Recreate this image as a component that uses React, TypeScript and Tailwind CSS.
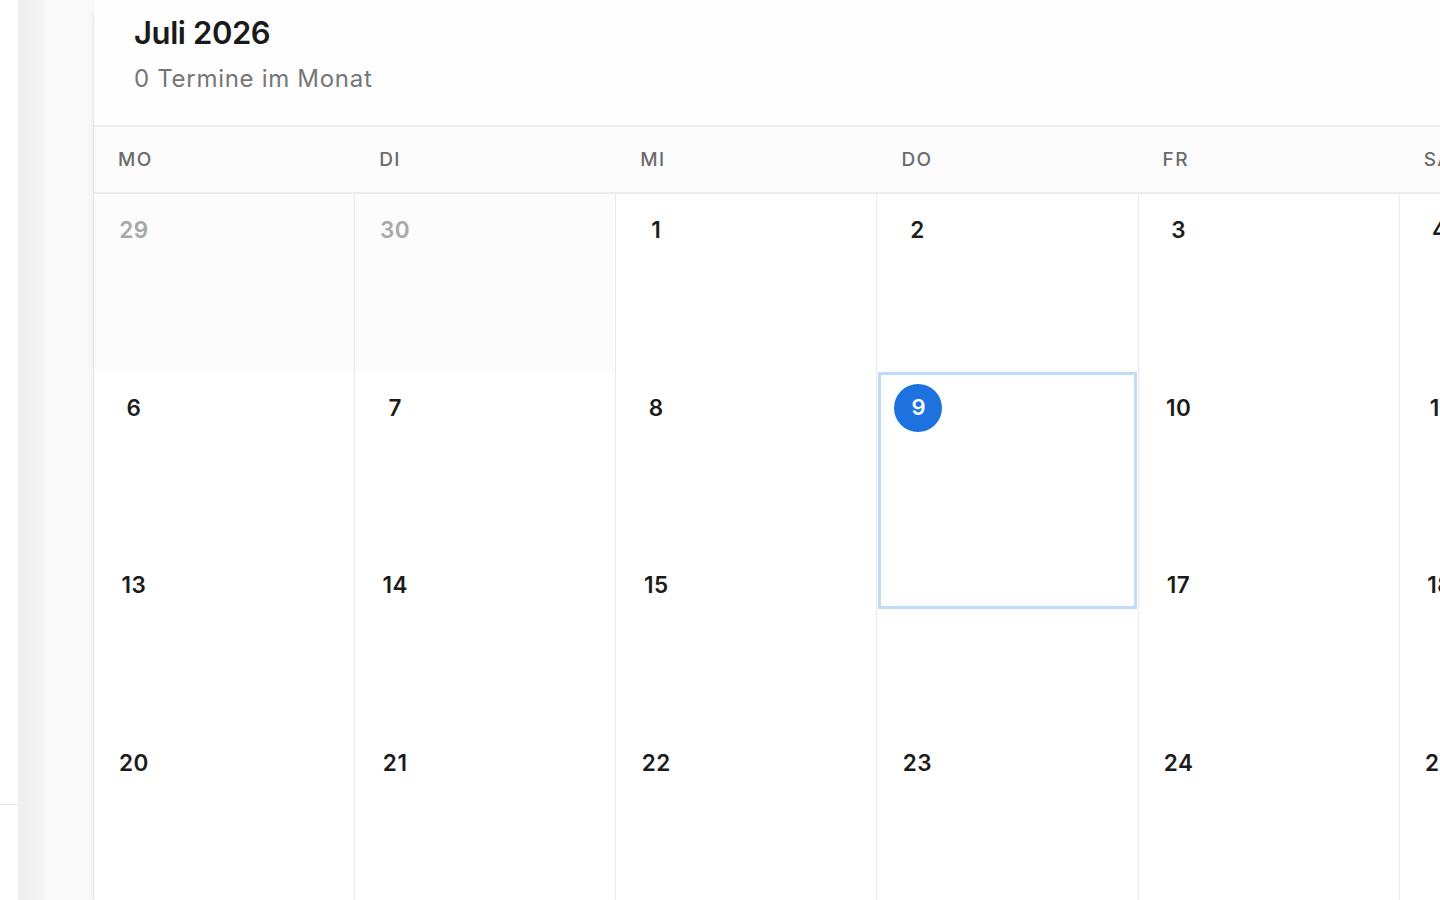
import React from 'react';

interface Day {
  n: number;
  muted?: boolean;
  today?: boolean;
}

const weekdays = ['Mo', 'Di', 'Mi', 'Do', 'Fr', 'Sa', 'So'];

// Juli 2026 starts on a Wednesday
const weeks: Day[][] = [
  [{ n: 29, muted: true }, { n: 30, muted: true }, { n: 1 }, { n: 2 }, { n: 3 }, { n: 4 }, { n: 5 }],
  [{ n: 6 }, { n: 7 }, { n: 8 }, { n: 9, today: true }, { n: 10 }, { n: 11 }, { n: 12 }],
  [{ n: 13 }, { n: 14 }, { n: 15 }, { n: 16 }, { n: 17 }, { n: 18 }, { n: 19 }],
  [{ n: 20 }, { n: 21 }, { n: 22 }, { n: 23 }, { n: 24 }, { n: 25 }, { n: 26 }],
  [{ n: 27 }, { n: 28 }, { n: 29 }, { n: 30 }, { n: 31 }, { n: 1, muted: true }, { n: 2, muted: true }],
];

const DayCell: React.FC<{ day: Day }> = ({ day }) => {
  return (
    <div
      className={`relative h-[177.5px] border-r border-[#ebebeb] px-4 pt-3 ${
        day.muted ? 'bg-[#fcfcfc]' : 'bg-white'
      }`}
    >
      <div
        className={`flex h-12 w-12 items-center justify-center text-[22.5px] font-semibold tracking-[0.5px] ${
          day.muted ? 'text-[#a8a8a8]' : 'text-[#1c1c1c]'
        }`}
      >
        {day.n}
      </div>

      {/* Selected day box, lies over the cell below */}
      {day.today && (
        <div className="absolute left-[1px] top-0 z-10 h-[237px] w-[259px] border-[3px] border-[#bfdcfb] bg-white px-[13px] pt-[9px]">
          <div className="flex h-12 w-12 items-center justify-center rounded-full bg-[#1d72e0] text-[22px] font-semibold text-white">
            {day.n}
          </div>
        </div>
      )}
    </div>
  );
};

export default function App() {
  return (
    <div
      className="flex h-[900px] w-[1440px] overflow-hidden bg-white"
      style={{ fontFamily: 'Inter, "Noto Sans", sans-serif' }}
    >
      {/* Sidebar edge */}
      <div className="flex w-[18px] shrink-0 flex-col bg-white">
        <div className="h-[805px] border-b border-[#e6e6e6]" />
      </div>

      {/* Scroll shadow strip */}
      <div className="w-[26px] shrink-0 bg-gradient-to-r from-[#eeeeee] to-[#f4f4f4]" />

      {/* Main area */}
      <div className="flex flex-1 bg-[#f9f9f9] pl-[49px]">
        <div className="mt-[-1px] w-[1829px] shrink-0 rounded-tl-[20px] border-l border-t border-[#e6e6e6] bg-white shadow-[-2px_0_4px_rgba(0,0,0,0.03)]">
          {/* Header */}
          <div className="h-[127px] border-b-2 border-[#ececec] bg-[#fefefe] px-10 pt-[12px]">
            <h1 className="text-[31px] font-semibold leading-[42px] tracking-[-0.4px] text-[#1a1a1a]">Juli 2026</h1>
            <p className="mt-[9px] text-[24px] leading-[32px] tracking-[0.7px] text-[#767676]">0 Termine im Monat</p>
          </div>

          {/* Weekday row */}
          <div className="grid h-[67px] grid-cols-7 border-b-2 border-[#ececec] bg-[#fcfcfc]">
            {weekdays.map((w) => (
              <div key={w} className="flex items-center px-6 pt-[2px] text-[19px] font-medium uppercase tracking-[1.4px] text-[#6b6b6b]">
                {w}
              </div>
            ))}
          </div>

          {/* Weeks */}
          {weeks.map((week, i) => (
            <div key={i} className="grid grid-cols-7">
              {week.map((d, j) => (
                <DayCell key={j} day={d} />
              ))}
            </div>
          ))}
        </div>
      </div>
    </div>
  );
}
